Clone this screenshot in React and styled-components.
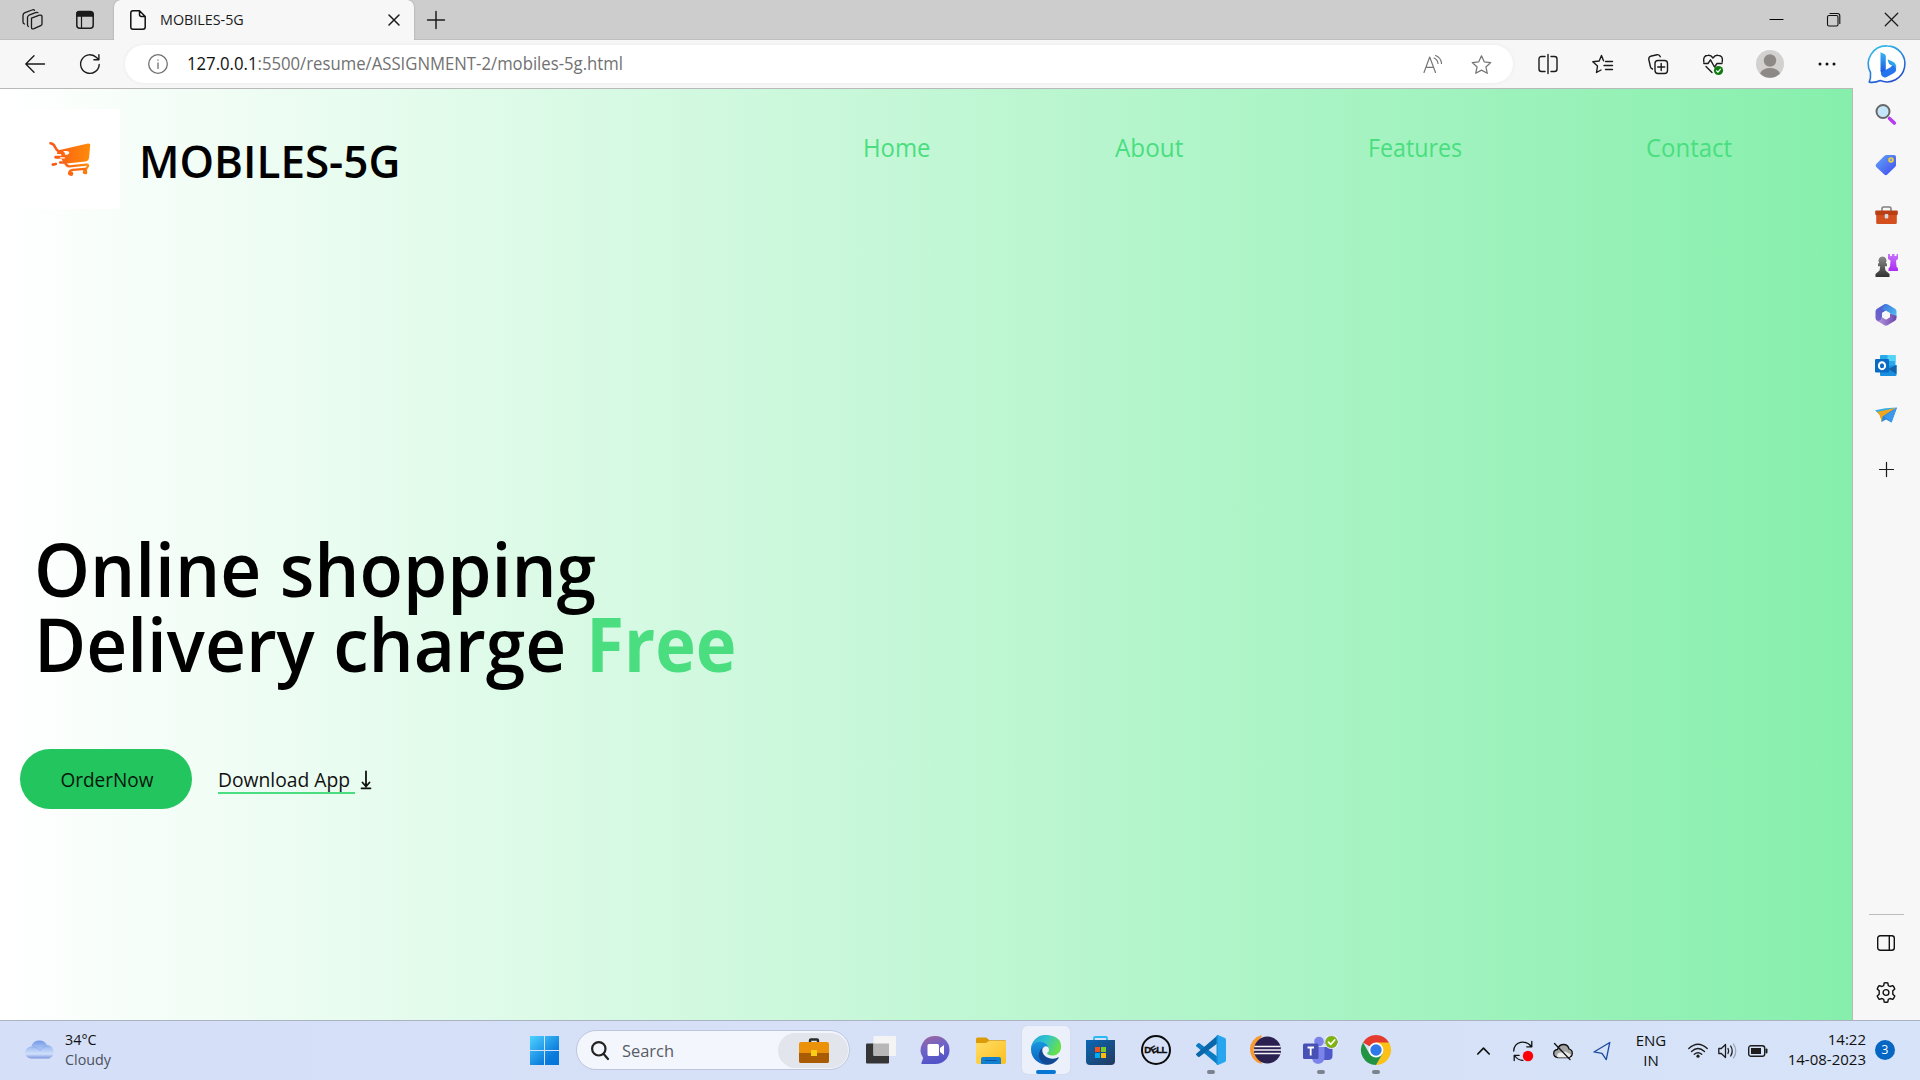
import React from "react";
import styled, { createGlobalStyle, css } from "styled-components";

const Global = createGlobalStyle`
  * { box-sizing: border-box; }
  html, body { margin: 0; padding: 0; overflow: hidden; }
  body { font-family: "Open Sans", "Noto Sans", sans-serif; color: #111; }
`;

/* narrows the letterforms horizontally, keeping their height */
const squeeze = (k, origin = "left") => css`
  transform: scaleX(${k});
  transform-origin: ${origin} center;
`;

const Screen = styled.div`
  width: 1920px;
  height: 1080px;
  display: flex;
  flex-direction: column;
  background: #f7f7f7;
  overflow: hidden;
`;

const Icon = styled.svg`
  display: block;
  flex: none;
  overflow: visible;
  width: ${(p) => p.$w}px;
  height: ${(p) => p.$h || p.$w}px;
  fill: none;
  stroke: ${(p) => p.$c || "none"};
  stroke-width: ${(p) => p.$sw || 1.3};
  stroke-linecap: round;
  stroke-linejoin: round;
`;

const Slot = styled.div`
  width: ${(p) => p.$w}px;
  height: ${(p) => (p.$h ? p.$h + "px" : "100%")};
  flex: none;
  display: flex;
  align-items: center;
  justify-content: center;
`;

/* ---------- tab strip ---------- */

const TabStrip = styled.div`
  height: 40px;
  flex: none;
  display: flex;
  background: #cdcdcd;
  border-bottom: 1px solid #bebebe;
`;
const StripTools = styled.div`
  width: 114px;
  display: flex;
  align-items: center;
  padding-left: 22px;
  gap: 33px;
`;
const Tab = styled.div`
  width: 300px;
  height: 40px;
  display: flex;
  align-items: center;
  padding: 0 14px 0 16px;
  background: #f7f7f7;
  border-radius: 7px 7px 0 0;
  box-shadow: 0 0 2px #9a9a9a;
  clip-path: inset(-3px -3px 0 -3px);
`;
const TabTitle = styled.span`
  flex: 1;
  margin: 0 0 2px 14px;
  font-size: 15px;
  color: #1b1b1b;
  ${squeeze(0.955)}
`;
const NewTab = styled.div`
  display: flex;
  align-items: center;
  margin-left: 13px;
`;
const WindowButtons = styled.div`
  margin-left: auto;
  display: flex;
  align-items: center;
  gap: 44px;
  padding-right: 21px;
`;

/* ---------- toolbar ---------- */

const Toolbar = styled.div`
  height: 48px;
  flex: none;
  display: flex;
  align-items: center;
  background: #f7f7f7;
`;
const Address = styled.div`
  width: 1388px;
  height: 38px;
  margin-right: 7.5px;
  display: flex;
  align-items: center;
  border-radius: 19px;
  background: #fff;
  box-shadow: 0 0 4px rgba(0, 0, 0, 0.06);
  padding: 0 21px 0 23px;
`;
const Url = styled.span`
  flex: 1;
  margin: 0 0 2px 19px;
  font-size: 17.5px;
  color: #717171;
  ${squeeze(0.955)}
  b { font-weight: 400; color: #111; }
`;

/* ---------- page ---------- */

const Body = styled.div`
  height: 932px;
  flex: none;
  display: flex;
`;
const Page = styled.main`
  width: 1853px;
  border-top: 1px solid #b9b9b9;
  border-right: 1px solid #b9b9b9;
  background: linear-gradient(to right, #ffffff, #86efac);
`;
const Header = styled.header`
  display: flex;
  height: 120px;
  padding: 20px 0 0 20px;
`;
const Logo = styled.div`
  width: 100px;
  height: 100px;
  background: #fff;
  padding: 33px 0 0 29px;
`;
const Brand = styled.h1`
  margin: 0 0 0 19px;
  width: 724px;
  font-size: 45px;
  line-height: 104px;
  font-weight: 600;
  color: #000;
  ${squeeze(0.977)}
`;
const Nav = styled.nav`
  display: grid;
  grid-template-columns: 252px 253px 278px 160px;
  height: 35px;
  margin-top: 21px;
`;
const NavLink = styled.a`
  font-size: 25px;
  line-height: 35px;
  color: #4ade80;
  ${(p) => squeeze(p.$k)}
`;
const Hero = styled.section`
  margin-top: 322px;
  padding-left: 20px;
`;
const Headline = styled.h2`
  margin: 0;
  padding-left: 14px;
  font-size: 75px;
  line-height: 75px;
  font-weight: 600;
  color: #000;
  white-space: nowrap;
`;
const HeadLine = styled.div`
  ${squeeze(0.949)}
`;
const Free = styled.span`
  display: inline-block;
  margin-left: 2px;
  font-weight: 700;
  color: #4ade80;
  ${squeeze(0.965)}
`;
const Actions = styled.div`
  display: flex;
  align-items: center;
  margin-top: 68px;
`;
const OrderButton = styled.button`
  width: 172px;
  height: 60px;
  border: 0;
  padding: 0 0 0 1px;
  border-radius: 30px;
  background: #22c55e;
  font: 400 20px "Open Sans", sans-serif;
  color: #06150b;
  span { display: inline-block; ${squeeze(0.95, "center")} }
`;
const Download = styled.a`
  align-self: flex-start;
  margin: 10px 0 0 26px;
  width: 137px;
  height: 35px;
  padding-top: 7px;
  font-size: 20px;
  line-height: 28px;
  white-space: nowrap;
  color: #111;
  border-bottom: 2px solid #4ade80;
  span { display: inline-block; ${squeeze(0.964)} }
`;
const Arrow = styled.span`
  margin: 1px 0 0 6px;
`;

/* ---------- side rail ---------- */

const Rail = styled.aside`
  width: 67px;
  display: flex;
  flex-direction: column;
  align-items: center;
  padding: 2px 0 2.5px;
`;
const RailSlot = styled.div`
  width: 67px;
  height: ${(p) => p.$h || 50}px;
  flex: none;
  display: flex;
  align-items: center;
  justify-content: center;
  padding-right: 1px;
`;
const RailRule = styled.div`
  width: 35px;
  height: 1px;
  margin: auto 0 3px;
  background: #bcbcbc;
`;

/* ---------- taskbar ---------- */

const Taskbar = styled.footer`
  height: 60px;
  flex: none;
  display: flex;
  align-items: center;
  background: linear-gradient(to right, #d5dff7, #d6e0f7 50%, #d6e3f8);
  border-top: 1px solid #abb3c2;
`;
const Weather = styled.div`
  width: 517px;
  display: flex;
  align-items: center;
  padding: 0 0 4px 25px;
  gap: 10px;
  font-size: 15px;
  line-height: 20px;
  color: #111;
`;
const WeatherText = styled.div`
  ${squeeze(0.955)}
  div + div { color: #4b5160; }
`;
const Search = styled.div`
  width: 274px;
  height: 40px;
  margin: 0 3px 1px 4px;
  display: flex;
  align-items: center;
  padding: 0 1px 0 14px;
  border-radius: 20px;
  border: 1px solid #bcc7de;
  background: #f3f6fd;
`;
const SearchText = styled.span`
  flex: 1;
  margin-left: 13px;
  font-size: 17px;
  color: #575b63;
  ${squeeze(0.965)}
`;
const SearchArt = styled.div`
  width: 70px;
  height: 35px;
  border-radius: 18px;
  background: #e2e5ec;
  display: flex;
  align-items: center;
  justify-content: center;
  padding-left: 1px;
`;
const App55 = styled.div`
  width: 55px;
  height: 59px;
  flex: none;
  display: grid;
  grid-template-rows: 49px 4px;
  justify-items: center;
  align-items: center;
`;
const AppTile = styled.div`
  width: 48px;
  height: 48px;
  margin-top: 9px;
  border-radius: 5px;
  display: flex;
  align-items: center;
  justify-content: center;
  background: ${(p) => (p.$on ? "#ecf0fa" : "transparent")};
  box-shadow: ${(p) => (p.$on ? "0 0 1px #b5bfd4" : "none")};
`;
const Running = styled.div`
  width: ${(p) => (p.$on ? 20 : 8)}px;
  height: 4px;
  border-radius: 2px;
  background: ${(p) => (p.$on ? "#0877d4" : "#7c828e")};
`;
const Tray = styled.div`
  margin-left: auto;
  height: 59px;
  display: flex;
  align-items: center;
  padding-right: 25px;
`;
const Lang = styled.div`
  width: 58px;
  margin: 0 4px 2px 0;
  font-size: 15px;
  line-height: 20px;
  text-align: center;
`;
const Clock = styled.div`
  width: 94px;
  margin-bottom: 4px;
  font-size: 15px;
  line-height: 20px;
  text-align: right;
`;
const Badge = styled.div`
  width: 20px;
  height: 20px;
  margin: 0 0 1px 9px;
  border-radius: 50%;
  background: #0567c3;
  color: #fff;
  font-size: 12px;
  line-height: 20px;
  text-align: center;
`;

const INK = "#1b1b1b";

/* ---------- drawings ---------- */

const Workspaces = () => (
  <Icon viewBox="0 0 21 21" $w={21} $c={INK} $sw={1.3}>
    <path d="M9.5 9.2 17.5 6.2Q20 5.600 20 8v7q0 1-1.300 1.600L12 19.700Q9.500 20.500 9.500 18.500z" />
    <path d="M16 3.800Q15.500 2.900 13.500 3.700L7 6.200Q5.500 7 5.500 8.500V16q0 1.200 1 1.500" />
    <path d="M12.500 1.200Q11.500.300 10 1L3 3.700Q1 4.600 1 6.200V13q0 1.500 1.500 2" />
  </Icon>
);
const VerticalTabs = () => (
  <Icon viewBox="0 0 18 18" $w={18} $c={INK} $sw={1.5}>
    <rect x=".8" y=".8" width="16.400" height="16.400" rx="3" />
    <path d="M1 1.500Q1.500.500 4 .500h10q3 0 3 3V5H1z" fill={INK} />
    <path d="M5.500 5v12" strokeWidth="1.200" />
  </Icon>
);
const FileIcon = () => (
  <Icon viewBox="0 0 16 20" $w={16} $h={20} $c="#111" $sw={1.5}>
    <path d="M3 .800h6.500L15.200 6.500V17q0 2.200-2.200 2.200H3Q.800 19.200.800 17V3Q.800.800 3 .800zM9.500 1v3.500q0 2 2 2H15" />
  </Icon>
);
const Cross = ({ w, sw }) => (
  <Icon viewBox="0 0 12 12" $w={w} $c={INK} $sw={sw}><path d="M1 1l10 10M11 1 1 11" /></Icon>
);
const Plus = ({ w }) => (
  <Icon viewBox="0 0 16 16" $w={w} $c={INK} $sw={1.3}><path d="M8 .500v15M.500 8h15" /></Icon>
);
const STAR = "M10 1.200l2.600 5.700 6.200.700-4.600 4.200 1.300 6.100L10 14.900l-5.500 3 1.300-6.100L1.200 7.600l6.200-.700z";

const Bing = () => (
  <Icon viewBox="0 0 38 38" $w={38}>
    <defs>
      <linearGradient id="bs" x1="0" y1="0" x2=".5" y2="1"><stop offset="0" stopColor="#35c9ee" /><stop offset="1" stopColor="#2352cf" /></linearGradient>
      <linearGradient id="bb" x1="0" y1="0" x2="0" y2="1"><stop offset="0" stopColor="#38b7f5" /><stop offset="1" stopColor="#1b4ee0" /></linearGradient>
      <linearGradient id="bc" x1="1" y1="0" x2="0" y2="1"><stop offset="0" stopColor="#2fd6e8" /><stop offset="1" stopColor="#2a6cf0" /></linearGradient>
    </defs>
    <path d="M19.200.900a18 18 0 1 1-7 34.700Q7 38 1.200 37.200q1.800-4 1.300-9.700A18 18 0 0 1 19.200.900z" fill="#fff" stroke="url(#bs)" strokeWidth="1.600" />
    <path d="M12.500 7.200 16.500 9q1.300.700 1.300 2.200v14L14.500 29q-2-1-2-3z" fill="url(#bb)" />
    <path d="M19.500 14.200l6 2.800q3 1.800 2.700 6-4-2.700-6.200-3.500-1-.500-1.300-1.500z" fill="url(#bc)" />
    <path d="M13 27.500l9.500-5.200 2-2q3.700 1.500 3.700 4.200 0 2.200-3 4l-6 3.300q-2.300 1.200-4.400 0Q12.500 30.200 13 27.500z" fill="#2575ee" />
  </Icon>
);

const SearchGlass = () => (
  <Icon viewBox="0 0 22 22" $w={22}>
    <path d="M14.500 14.500l4.800 4.500" stroke="#b53cf0" strokeWidth="3.600" />
    <circle cx="8" cy="7.500" r="6.500" fill="#c5e5fa" stroke="#686868" strokeWidth="2" />
  </Icon>
);
const PriceTag = () => (
  <Icon viewBox="0 0 22 22" $w={22}>
    <defs><linearGradient id="tg" x1="0" y1="0" x2="1" y2="1"><stop offset="0" stopColor="#62a9f7" /><stop offset="1" stopColor="#4147ee" /></linearGradient></defs>
    <path d="M11.500 1H19q2 0 2 2v8q0 1.200-1 2l-7.700 7.500q-1.500 1.400-3 0L1.200 13q-1.300-1.500 0-3L9.500 1.800q.9-.8 2-.8z" fill="url(#tg)" />
    <circle cx="16" cy="6" r="2" fill="#779ae9" stroke="#f5cf3a" strokeWidth="1.600" />
  </Icon>
);
const Toolbox = () => (
  <Icon viewBox="0 0 23 18" $w={23} $h={18}>
    <path d="M7 5V2.500Q7 1 8.500 1h6Q16 1 16 2.500V5" stroke="#818181" strokeWidth="1.600" />
    <rect x="1.200" y="8" width="20.600" height="10" rx="1.300" fill="#d44f1e" />
    <rect x=".2" y="4.600" width="22.600" height="4.500" rx="1" fill="#b93e14" />
    <rect x="9.700" y="8" width="3.600" height="4.500" rx="1" fill="#d4dadd" />
  </Icon>
);
const Chess = () => (
  <Icon viewBox="0 0 23 23" $w={23}>
    <defs>
      <linearGradient id="rk" x1="0" y1="0" x2="0" y2="1"><stop offset="0" stopColor="#c873fb" /><stop offset="1" stopColor="#a92cf3" /></linearGradient>
      <linearGradient id="pw" x1="0" y1="0" x2="0" y2="1"><stop offset="0" stopColor="#8b8b8b" /><stop offset="1" stopColor="#333" /></linearGradient>
    </defs>
    <path d="M13 0h2v2h2V0h2.500v2h2V0H23v5l-2 1.500.5 6 1.500 2V17h-9.500v-2.500l1.500-2 .5-6L13 5z" fill="url(#rk)" />
    <path d="M7.500 2.500a4 4 0 0 1 3.300 6.200l1.200 1.100v2.500H9.800l.7 4.200 4 3.500v3H.5v-3l4-3.500.7-4.200H3V9.800l1.200-1.100A4 4 0 0 1 7.500 2.500z" fill="url(#pw)" />
  </Icon>
);
const M365 = () => (
  <Icon viewBox="0 0 22 22" $w={22}>
    <defs>
      <linearGradient id="m1" x1="0" y1="1" x2="1" y2="0"><stop offset="0" stopColor="#7d62c6" /><stop offset="1" stopColor="#3a62d6" /></linearGradient>
      <linearGradient id="m2" x1="0" y1="0" x2="1" y2="1"><stop offset="0" stopColor="#3f6fdc" /><stop offset="1" stopColor="#4cc6f2" /></linearGradient>
      <linearGradient id="m3" x1="0" y1="0" x2="1" y2="0"><stop offset="0" stopColor="#b89ae0" /><stop offset="1" stopColor="#6b45ad" /></linearGradient>
    </defs>
    <path d="M11 0q-1 0-2 .6L2 4.700Q.500 5.600.500 7.500V14q0 1.800 1.500 2.700l1.500.800q3.500-1 3.500-4.500V9L13.500 5z" fill="url(#m1)" />
    <path d="M11 0q1 0 2 .6l7 4.100q1.500.900 1.500 2.800v5.800L14.500 9 7 5Q8.500 0 11 0z" fill="url(#m2)" />
    <path d="M21.500 12v2q0 1.800-1.500 2.700l-7.500 4.600q-1.500.800-3 0L2 16.700q5 .300 5-3.700l4 2.500 4-2.500V9.500z" fill="url(#m3)" />
    <path d="M11 6.800l3.800 2.200v4.200L11 15.400l-3.800-2.200V9z" fill="#f7f7f7" />
  </Icon>
);
const Outlook = () => (
  <Icon viewBox="0 0 22 21" $w={22} $h={21}>
    <rect x="5" y="0" width="15.500" height="14" rx="1" fill="#2aa9ea" />
    <path d="M12.500 0H20.500v6h-8z" fill="#54d3f8" /><path d="M5 6h8v7H5z" fill="#0c5fb0" />
    <path d="M5 12l16.500-2V20q0 1-1 1H6q-1 0-1-1z" fill="#1890df" />
    <path d="M21.500 10v9L13 14z" fill="#1261aa" />
    <rect x="0" y="4" width="14" height="13.500" rx="1.200" fill="#0b6ac4" />
    <ellipse cx="7" cy="10.700" rx="3.100" ry="3.500" stroke="#fff" strokeWidth="2" />
  </Icon>
);
const Plane = () => (
  <Icon viewBox="0 0 22 16" $w={22} $h={16}>
    <path d="M0 3.200Q10 .500 22 .500L5 8z" fill="#35afe8" />
    <path d="M22 .500L16.500 15.500 11 12.500 6.500 15 5.500 8z" fill="#2687de" />
    <path d="M2 5l19-4.200L7.500 9.500 7 15 4.500 8z" fill="#f0a51f" />
    <path d="M22 .500L9 9.500 16.500 15.500z" fill="#3a98ed" />
  </Icon>
);
const SidePanel = () => (
  <Icon viewBox="0 0 18 16" $w={18} $h={16} $c="#111" $sw={1.4}><rect x=".7" y=".7" width="16.600" height="14.600" rx="2.500" /><path d="M12.300 1v14" /></Icon>
);
const Gear = () => (
  <Icon viewBox="0 0 20 21" $w={20} $h={21} $c="#111" $sw={1.4}>
    <circle cx="10" cy="10.500" r="2.900" />
    <path d="M8.200.900Q10 .500 11.800.900L12.300 3.600 14 4.500 16.700 3.600Q18 5 18.800 6.900L16.800 8.800V12.200L18.800 14.100Q18 16 16.700 17.400L14 16.500 12.300 17.400 11.800 20.100Q10 20.500 8.200 20.100L7.700 17.400 6 16.500 3.300 17.400Q2 16 1.200 14.100L3.200 12.200V8.800L1.200 6.900Q2 5 3.300 3.600L6 4.500 7.700 3.600z" />
  </Icon>
);

const Cart = () => (
  <Icon viewBox="0 0 42 35" $w={42} $h={35}>
    <defs><linearGradient id="ct" x1="0" y1="0" x2="1" y2="0"><stop offset="0" stopColor="#fa5a17" /><stop offset="1" stopColor="#ff8c08" /></linearGradient></defs>
    <path d="M1.400 1.300Q5 2 6 5T10.500 9.500" stroke="#f95d19" strokeWidth="2.400" />
    <path d="M8.500 8.500L39 1.500q2.500-.3 2.200 2L40 16q-.5 3-3.500 3.500L18 21.500q-3 .3-4.500-2.500l-1-2.300H6.500q-1.500-.200-1.300-1.600T7 13.700h5.500L12 12H8z" fill="url(#ct)" />
    <path d="M15 9.500h3.500q1.500.200 1.300 1.400t-1.500 1.300h-2" stroke="#fff" strokeWidth="1" fill="#fff" />
    <path d="M11.500 15.800h4" stroke="#fff" strokeWidth="1.200" />
    <path d="M3.800 22.600l3-.6" stroke="#fa5a17" strokeWidth="2.700" />
    <path d="M11 20.500h5q1.500 4 4.500 3.800l17-1.700q2.500 0 1 2.300l-3.300 5" stroke="url(#ct)" strokeWidth="2.300" />
    <path d="M36 26.800l-12 1q-4 .500-4 4M36 27l1 4" stroke="#fc6b12" strokeWidth="2.300" />
    <circle cx="22" cy="31.800" r="2.300" fill="#fc6813" /><circle cx="36" cy="30" r="2.300" fill="#fd7a0d" />
  </Icon>
);

const Cloud = () => (
  <Icon viewBox="0 0 30 20" $w={30} $h={20}>
    <defs><linearGradient id="cl" x1="0" y1="0" x2="0" y2="1"><stop offset="0" stopColor="#7399e8" /><stop offset=".75" stopColor="#cfe0fa" /><stop offset="1" stopColor="#7c93de" /></linearGradient></defs>
    <path d="M6 19.500a6 6 0 0 1 .3-12 8.500 8.500 0 0 1 15.700-1.500 7 7 0 0 1 2 13.500z" fill="url(#cl)" />
    <path d="M7 8q5-.500 8 3.500 3-4.500 8-4.300" stroke="#91b0ef" strokeWidth="1" />
  </Icon>
);
const WinStart = () => (
  <Icon viewBox="0 0 29 29" $w={29}>
    <defs><linearGradient id="ws" gradientUnits="userSpaceOnUse" x1="0" y1="0" x2="26" y2="29"><stop offset="0" stopColor="#4fd2ff" /><stop offset=".75" stopColor="#0a7bdc" /><stop offset="1" stopColor="#0474d8" /></linearGradient></defs>
    <path d="M0 0h14v14H0zM15 0h14v14H15zM0 15h14v14H0zM15 15h14v14H15z" fill="url(#ws)" />
  </Icon>
);
const Briefcase = () => (
  <Icon viewBox="0 0 30 25" $w={30} $h={25}>
    <path d="M11 4V2.500q0-1 1-1h6q1 0 1 1V4" stroke="#2a2a2a" strokeWidth="2.400" />
    <rect y="4" width="30" height="21" rx="2" fill="#ec920a" /><path d="M0 15h30v8q0 2-2 2H2q-2 0-2-2z" fill="#a95c04" />
    <rect x="12" y="12" width="6" height="6" fill="#f8ce17" />
  </Icon>
);
const TaskView = () => (
  <Icon viewBox="0 0 30 28" $w={30} $h={28}>
    <rect y="7.500" width="23" height="20" rx="1" fill="#353535" /><rect x="7.500" width="22.500" height="20" rx="1" fill="#f4f4f4" /><path d="M7.500 7.500H23V20H8.500q-1 0-1-1z" fill="#b7b7b7" />
  </Icon>
);
const Chat = () => (
  <Icon viewBox="0 0 29 28" $w={29} $h={28}>
    <defs><linearGradient id="ch" x1="0" y1="0" x2=".3" y2="1"><stop offset="0" stopColor="#a0669b" /><stop offset=".5" stopColor="#6e63c8" /><stop offset="1" stopColor="#5354c8" /></linearGradient></defs>
    <path d="M14.500 0a14 14 0 0 1 0 28H1q-1 0-.6-1l1.800-5A14 14 0 0 1 14.500 0z" fill="url(#ch)" />
    <rect x="6.500" y="8" width="11.500" height="12" rx="1.500" fill="#fff" /><path d="M19 12l4-3v10l-4-3z" fill="#fff" />
  </Icon>
);
const Folder = () => (
  <Icon viewBox="0 0 30 27" $w={30} $h={27}>
    <defs><linearGradient id="fd" x1="0" y1="0" x2="1" y2="1"><stop offset="0" stopColor="#ffdd67" /><stop offset="1" stopColor="#fdbf1d" /></linearGradient></defs>
    <path d="M0 2q0-1.500 1.500-1.500h8q1 0 1.800.8l2 2H29q1 0 1 1V8H0z" fill="#dc9c09" />
    <path d="M0 6h10l3-2h16q1 0 1 1v20q0 2-2 2H2q-2 0-2-2z" fill="url(#fd)" />
    <path d="M5 27v-5q0-2 2-2h16q2 0 2 2v5z" fill="#1180d0" /><path d="M9.500 23.500h11" stroke="#0a559e" strokeWidth="1.200" />
  </Icon>
);
const Edge = () => (
  <Icon viewBox="0 0 256 256" $w={30}>
    <defs>
      <linearGradient id="e1" x1="0" y1="0" x2="1" y2=".4"><stop offset="0" stopColor="#279fdb" /><stop offset=".5" stopColor="#30c3cf" /><stop offset="1" stopColor="#66e04c" /></linearGradient>
      <linearGradient id="e2" x1="0" y1="0" x2="0" y2="1"><stop offset="0" stopColor="#199de4" /><stop offset="1" stopColor="#0b61bc" /></linearGradient>
    </defs>
    <path d="M231 190.500q-5 2.700-10.500 4.700a102 102 0 0 1-36 6.500c-47.400 0-88.700-32.600-88.700-74.500a31.500 31.500 0 0 1 16.500-27.300C69.400 101.700 58.400 146.400 58.400 172.500c0 74 68.200 81.500 82.900 81.500 7.900 0 19.900-2.300 27-4.500l1.300-.4a128.300 128.300 0 0 0 66.600-52.800 4 4 0 0 0-5.200-5.800z" fill="#114a93" />
    <path d="M105.700 241.400a79.200 79.200 0 0 1-22.700-21.300 80.700 80.700 0 0 1 29.500-120.200C115.700 98.500 121 95.600 128 95.800a32.400 32.400 0 0 1 25.700 13c-.2-24.500-24.700-72.600-95-72.600C30 36.200 0 80 0 121.200a130.300 130.300 0 0 0 12.100 56 128 128 0 0 0 156.400 67 75.500 75.500 0 0 1-62.800-2.800z" fill="url(#e2)" />
    <path d="M152.300 148.900c-1 1.100-3.800 2.900-3.800 6.600 0 3.100 2 6.100 5.600 8.700 17.400 12 50.100 10.400 50.200 10.400a72 72 0 0 0 36.600-10 74.100 74.100 0 0 0 36.800-64c.3-27.200-9.700-45.200-13.700-53.200C238.300 12.500 183.500 0 128 0A128 128 0 0 0 0 126.200c.5-37.700 37.900-68.100 82.500-68.100 3.600 0 24.200.3 43.300 10.400 16.900 8.900 25.700 19.600 31.900 30.200 6.400 11 7.500 24.900 7.500 30.500s-2.800 13.800-12.900 19.700z" transform="scale(.925 1)" fill="url(#e1)" />
  </Icon>
);
const Store = () => (
  <Icon viewBox="0 0 29 29" $w={29}>
    <defs><linearGradient id="st" x1="0" y1="0" x2="1" y2="1"><stop offset="0" stopColor="#0a68b5" /><stop offset="1" stopColor="#23395d" /></linearGradient></defs>
    <path d="M8 5V2q0-1 1-1h11q1 0 1 1v3" stroke="#2bb9f1" strokeWidth="1.800" />
    <path d="M0 4h29v21q0 4-4 4H4q-4 0-4-4z" fill="url(#st)" />
    <path d="M9 11h5v5H9z" fill="#f1511b" /><path d="M15 11h5v5h-5z" fill="#80cc28" /><path d="M9 17h5v5H9z" fill="#00adef" /><path d="M15 17h5v5h-5z" fill="#fbbc09" />
  </Icon>
);
const DellMark = styled.div`
  width: 30px;
  height: 30px;
  border: 2px solid #0b0b0b;
  border-radius: 50%;
  display: flex;
  align-items: center;
  justify-content: center;
  font: 700 9.5px/26px "Liberation Sans", sans-serif;
  letter-spacing: -0.6px;
  color: #0b0b0b;
  -webkit-text-stroke: 0.3px #0b0b0b;
  i { font-style: normal; display: inline-block; transform: rotate(-32deg); }
`;
const VSCode = () => (
  <Icon viewBox="0 0 30 30" $w={30}>
    <path d="M0 10.200l2-2q.8-.6 1.600 0L22 22v8L.500 11.500q-.8-.7-.5-1.300z" fill="#0b7cc4" />
    <path d="M0 19.800l2 2q.8.600 1.600 0L22 8V0L.500 18.500q-.8.700-.5 1.300z" fill="#0a67aa" />
    <path d="M22 0l7 3q1 .500 1 1.700v20.600q0 1.200-1 1.700l-7 3q-1 0-1.500-1 1.500 0 1.500-2V3q0-2-1.500-2Q21 0 22 0z" fill="#27a5ee" />
    <path d="M20.500 1Q21 0 22 0v30q-1 0-1.500-1z" fill="#1e93dc" />
  </Icon>
);
const Eclipse = () => (
  <Icon viewBox="0 0 30 28" $w={30} $h={28}>
    <path d="M10 0A14 14 0 0 0 10 27Q0 14 10 0z" fill="#f79a32" stroke="#f79a32" strokeWidth="1.500" />
    <circle cx="16.500" cy="14" r="13.500" fill="#2b2150" />
    <path d="M4 10.500h25M3.200 14h26.600M4 17.500h25" stroke="#f5f4fa" strokeWidth="1.500" />
  </Icon>
);
const Teams = () => (
  <Icon viewBox="0 0 36 30" $w={36} $h={30}>
    <circle cx="25" cy="7.500" r="3.500" fill="#5059c9" /><path d="M20 12h8q1.500 0 1.500 1.500v7q0 4.500-4.500 4.500h-5z" fill="#5059c9" />
    <circle cx="16" cy="6.500" r="4.800" fill="#7b83eb" /><path d="M9 12h12.500v9.500q0 7-6.500 7.500-6-.500-6-7.500z" fill="#7b83eb" />
    <rect y="8.500" width="15.500" height="15.500" rx="1.500" fill="#4750b5" /><path d="M4.500 12.500h6.500M7.700 12.500v8" stroke="#fff" strokeWidth="1.800" strokeLinecap="butt" />
    <circle cx="28.500" cy="7" r="7" fill="#fff" /><circle cx="28.500" cy="7" r="6" fill="#7db50b" stroke="#8b9a77" strokeWidth=".7" /><path d="M25.500 7.200l2.200 2.200 4-4.400" stroke="#fff" strokeWidth="1.700" />
  </Icon>
);
const Chrome = () => (
  <Icon viewBox="0 0 30 30" $w={30}>
    <path d="M15 15L2 7.500A15 15 0 0 1 28 7.500z" fill="#e33b2e" />
    <path d="M15 7.500h13A15 15 0 0 1 15 30l6.500-11.200z" fill="#fbc116" />
    <path d="M8.500 18.800L2 7.500A15 15 0 0 0 15 30l6.500-11.200z" fill="#229342" />
    <circle cx="15" cy="15" r="7.400" fill="#fff" /><circle cx="15" cy="15" r="5.700" fill="#2f78e8" />
  </Icon>
);

const TaskApp = ({ on, running, children }) => (
  <App55>
    <AppTile $on={on}>{children}</AppTile>
    {(on || running) && <Running $on={on} />}
  </App55>
);

export default function App() {
  return (
    <Screen>
      <Global />
      <TabStrip>
        <StripTools><Workspaces /><VerticalTabs /></StripTools>
        <Tab>
          <FileIcon />
          <TabTitle>MOBILES-5G</TabTitle>
          <Cross w={12} sw={1.5} />
        </Tab>
        <NewTab><Plus w={18} /></NewTab>
        <WindowButtons>
          <Icon viewBox="0 0 13 13" $w={13} $c="#000" $sw={1.1}><path d="M0 6.500h13" /></Icon>
          <Icon viewBox="0 0 13 13" $w={13} $c="#111" $sw={1.1}><rect x=".5" y="2.500" width="10.500" height="10.500" rx="1.500" /><path d="M3 .500h7.500q2.300 0 2.300 2.300V10.500" /></Icon>
          <Cross w={15} sw={1} />
        </WindowButtons>
      </TabStrip>

      <Toolbar>
        <Slot $w={70}>
          <Icon viewBox="0 0 20 18" $w={20} $h={18} $c={INK} $sw={1.4}><path d="M19.500 9H.800M9 .800.800 9 9 17.200" /></Icon>
        </Slot>
        <Slot $w={40}>
          <Icon viewBox="0 0 20 20" $w={20} $c={INK} $sw={1.4}><path d="M19.200 10.500A9.300 9.300 0 1 1 16.500 3.500L18.800 5.800M18.900.800v5h-5" /></Icon>
        </Slot>
        <Slot $w={14.5} />
        <Address>
          <Icon viewBox="0 0 20 20" $w={20} $c="#717171" $sw={1.3}><circle cx="10" cy="10" r="9.300" /><path d="M10 9v5.500M10 6v.200" /></Icon>
          <Url><b>127.0.0.1</b>:5500/resume/ASSIGNMENT-2/mobiles-5g.html</Url>
          <Icon viewBox="0 0 20 18" $w={20} $h={18} $c="#767676" $sw={1.2}><path d="M1 17.500 6.700 2 12.500 17.500M3 12.300h7.500M11 3q3.500 1.500 4 5.500M12.500.500Q18 2.500 18.500 8.500" /></Icon>
          <Slot $w={28} />
          <Icon viewBox="0 0 20 19" $w={21} $c="#767676" $sw={1.2}><path d={STAR} /></Icon>
        </Address>
        <Slot $w={55}>
          <Icon viewBox="0 0 20 20" $w={20} $c={INK} $sw={1.4}><path d="M10 .500v19M7 2.500H3.500Q1 2.500 1 5v10q0 2.500 2.500 2.500H7M13 2.500h3.500Q19 2.500 19 5v10q0 2.500-2.500 2.500H13" /></Icon>
        </Slot>
        <Slot $w={55}>
          <Icon viewBox="0 0 21 20" $w={21} $h={20} $c={INK} $sw={1.4}><path d="M11.500 6.800 9.500 1.500 7.200 7 .800 7.800 5.500 12 4.500 18.500 9 16M13.500 7.500h7M12 11.500h8.500M13.500 15.500h7" /></Icon>
        </Slot>
        <Slot $w={55}>
          <Icon viewBox="0 0 20 20" $w={20} $c={INK} $sw={1.4}><rect x="7" y="6.500" width="12.500" height="13" rx="3" /><path d="M13.200 9.500v7M9.700 13h7M4.500 15Q3 14.500 2.500 13L.800 5.500Q.500 3 2.500 2.300L9 .700Q11.500.300 12.300 2.800" /></Icon>
        </Slot>
        <Slot $w={55}>
          <Icon viewBox="0 0 20 21" $w={20} $h={21} $c={INK} $sw={1.4}>
            <path d="M.800 8Q-.200 1.500 5 1.300 8 1 10 4 12 1 15 1.300 20.500 1.700 19.200 8M.800 9.500H5L7.500 5.800 11.500 13 14 9.500h5M3 12.500 9 18.500" />
            <circle cx="15.500" cy="16.500" r="4.600" fill="#107c10" stroke="none" /><path d="M13.500 16.800l1.500 1.400 2.500-3" stroke="#fff" strokeWidth="1.200" />
          </Icon>
        </Slot>
        <Slot $w={59}>
          <Icon viewBox="0 0 28 28" $w={28}><circle cx="14" cy="14" r="14" fill="#d3d1cf" /><circle cx="14" cy="10.500" r="6.200" fill="#8d8986" /><path d="M4 23.500Q6.500 18 14 18t10 5.500A14 14 0 0 1 4 23.500z" fill="#8d8986" /></Icon>
        </Slot>
        <Slot $w={56}>
          <Icon viewBox="0 0 18 4" $w={18} $h={4}><circle cx="2" cy="2" r="1.500" fill="#111" /><circle cx="9" cy="2" r="1.500" fill="#111" /><circle cx="16" cy="2" r="1.500" fill="#111" /></Icon>
        </Slot>
        <Slot $w={63}><Bing /></Slot>
      </Toolbar>

      <Body>
        <Page>
          <Header>
            <Logo><Cart /></Logo>
            <Brand>MOBILES-5G</Brand>
            <Nav>
              <NavLink $k={0.955}>Home</NavLink>
              <NavLink $k={0.97}>About</NavLink>
              <NavLink $k={0.93}>Features</NavLink>
              <NavLink $k={0.957}>Contact</NavLink>
            </Nav>
          </Header>
          <Hero>
            <Headline>
              <HeadLine>Online shopping</HeadLine>
              <HeadLine>Delivery charge <Free>Free</Free></HeadLine>
            </Headline>
            <Actions>
              <OrderButton><span>OrderNow</span></OrderButton>
              <Download><span>Download App</span></Download>
              <Arrow>
                <Icon viewBox="0 0 10 18" $w={10} $h={18} $c="#111" $sw={1.8}><path d="M5 .500v15M1.500 11.500 5 15.500 8.500 11.500M.500 17.300h9" /></Icon>
              </Arrow>
            </Actions>
          </Hero>
        </Page>
        <Rail>
          <RailSlot><SearchGlass /></RailSlot>
          <RailSlot><PriceTag /></RailSlot>
          <RailSlot><Toolbox /></RailSlot>
          <RailSlot><Chess /></RailSlot>
          <RailSlot><M365 /></RailSlot>
          <RailSlot><Outlook /></RailSlot>
          <RailSlot><Plane /></RailSlot>
          <RailSlot $h={59}><Plus w={15} /></RailSlot>
          <RailRule />
          <RailSlot><SidePanel /></RailSlot>
          <RailSlot><Gear /></RailSlot>
        </Rail>
      </Body>

      <Taskbar>
        <Weather>
          <Cloud />
          <WeatherText><div>34°C</div><div>Cloudy</div></WeatherText>
        </Weather>
        <TaskApp><WinStart /></TaskApp>
        <Search>
          <Icon viewBox="0 0 18 19" $w={18} $h={19} $c="#222" $sw={2.2}><circle cx="7.800" cy="7.800" r="6.700" /><path d="M12.700 13l4.300 5" /></Icon>
          <SearchText>Search</SearchText>
          <SearchArt><Briefcase /></SearchArt>
        </Search>
        <TaskApp><TaskView /></TaskApp>
        <TaskApp><Chat /></TaskApp>
        <TaskApp><Folder /></TaskApp>
        <TaskApp on><Edge /></TaskApp>
        <TaskApp><Store /></TaskApp>
        <TaskApp><DellMark>D<i>E</i>LL</DellMark></TaskApp>
        <TaskApp running><VSCode /></TaskApp>
        <TaskApp><Eclipse /></TaskApp>
        <TaskApp running><Teams /></TaskApp>
        <TaskApp running><Chrome /></TaskApp>
        <Tray>
          <Slot $w={37}><Icon viewBox="0 0 13 8" $w={13} $h={8} $c="#111" $sw={1.7}><path d="M.800 7 6.500 1.200 12.200 7" /></Icon></Slot>
          <Slot $w={42}>
            <Icon viewBox="0 0 20 20" $w={20} $c="#111" $sw={1.3}><path d="M.700 10Q1 3 7.500 1.300 14 .200 18.500 5.500M18.800.500v5.300h-5M1.200 19.500v-5.200h5M1.500 14.500Q5 19.500 10 19.300" /><circle cx="15" cy="15" r="5.200" fill="#fb0007" stroke="none" /></Icon>
          </Slot>
          <Slot $w={38}>
            <Icon viewBox="0 0 20 16" $w={20} $h={16} $c="#111" $sw={1.3}><path d="M5 14.500Q.700 14 .700 10.500T4.500 6.500Q6 1.500 10.500 1.500T16 6q3.500 1 3.300 4.500T15.500 14.500z" fill="#a5a5a5" /><path d="M4 13.500Q4 9.500 8 9.500l4-1 6 3-2 3H5z" fill="#eee" stroke="none" /><path d="M1.500.500 17 16.500" /></Icon>
          </Slot>
          <Slot $w={40}><Icon viewBox="0 0 19 20" $w={18} $h={20} $c="#1a4ba0" $sw={1.4}><path d="M17.700 1 1 11l8.500 1.500 4.500 6.500z" /></Icon></Slot>
          <Lang>ENG<br />IN</Lang>
          <Slot $w={28}>
            <Icon viewBox="0 0 20 15" $w={20} $h={15} $c="#1d1d1d" $sw={1.4}><path d="M.800 5.500Q10-3.200 19.200 5.500M3.500 8.500q6.500-6 13 0M6.300 11.300q3.700-3.300 7.400 0" /><circle cx="10" cy="13.200" r="1.600" fill="#1d1d1d" stroke="none" /></Icon>
          </Slot>
          <Slot $w={31}>
            <Icon viewBox="0 0 20 16" $w={20} $h={16} $c="#1d1d1d" $sw={1.3}><path d="M.800 5.500h2.500L7.500 1.500v13L3.300 10.500H.800zM10 5.500q1.300 2.500 0 5M12.700 3q3 5 0 10" /><path d="M15.500 1q4.500 7 0 14" stroke="#9da6b8" /></Icon>
          </Slot>
          <Slot $w={29}>
            <Icon viewBox="0 0 20 12" $w={20} $h={12} $c="#1d1d1d" $sw={1.4}><rect x=".7" y=".7" width="16" height="10.600" rx="2.300" /><rect x="3" y="3" width="10" height="6" fill="#1d1d1d" stroke="none" /><path d="M18.500 4.500v3" strokeWidth="2" /></Icon>
          </Slot>
          <Clock>14:22<br />14-08-2023</Clock>
          <Badge>3</Badge>
        </Tray>
      </Taskbar>
    </Screen>
  );
}
